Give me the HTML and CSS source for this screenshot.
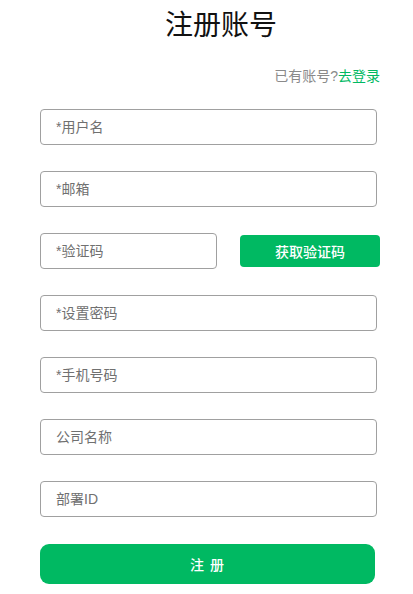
FILE: index.html
```html
<!DOCTYPE html>
<html lang="zh-CN">
<head>
<meta charset="utf-8">
<title>注册账号</title>
<link rel="stylesheet" href="styles.css">
</head>
<body>
<div class="page">
  <h1 class="title">注册账号</h1>
  <div class="login-link">已有账号?<a href="#" class="green">去登录</a></div>
  <form class="form">
    <input class="field" type="text" placeholder="*用户名">
    <input class="field" type="text" placeholder="*邮箱">
    <div class="code-row">
      <input class="field code" type="text" placeholder="*验证码">
      <button type="button" class="code-btn">获取验证码</button>
    </div>
    <input class="field" type="password" placeholder="*设置密码">
    <input class="field" type="text" placeholder="*手机号码">
    <input class="field" type="text" placeholder="公司名称">
    <input class="field" type="text" placeholder="部署ID">
    <button type="button" class="submit">注 册</button>
  </form>
</div>
</body>
</html>
```
FILE: styles.css
```css
* { box-sizing: border-box; }
body {
  margin: 0;
  background: #fff;
  font-family: "Liberation Sans", "Noto Sans CJK SC", sans-serif;
}
.page {
  width: 380px;
  padding-left: 40px;
}
.title {
  margin: 0;
  padding: 6px 0 0 22px;
  font-size: 28px;
  line-height: 40px;
  font-weight: normal;
  color: #111;
  text-align: center;
}
.login-link {
  margin-top: 20px;
  text-align: right;
  font-size: 14px;
  line-height: 20px;
  color: #8a8a8a;
}
.green { color: #00b962; text-decoration: none; }
.form {
  display: flex;
  flex-direction: column;
  gap: 26px;
  margin-top: 23px;
}
.field {
  display: block;
  width: 337px;
  height: 36px;
  border: 1px solid #a0a0a0;
  border-radius: 4px;
  padding: 0 15px;
  font-family: inherit;
  font-size: 14px;
  color: #333;
  outline: none;
}
.field::placeholder { color: #707070; }
.code-row {
  display: flex;
  align-items: center;
  justify-content: space-between;
}
.field.code { width: 177px; }
.code-btn {
  width: 140px;
  height: 32px;
  border: none;
  border-radius: 4px;
  background: #00b962;
  color: #fff;
  font-family: inherit;
  font-size: 14px;
  font-weight: 500;
}
.submit {
  width: 335px;
  height: 40px;
  margin-top: 1px;
  border: none;
  border-radius: 9px;
  background: #00b962;
  color: #fff;
  font-family: inherit;
  font-size: 14px;
  font-weight: 500;
  letter-spacing: 1px;
}
```
